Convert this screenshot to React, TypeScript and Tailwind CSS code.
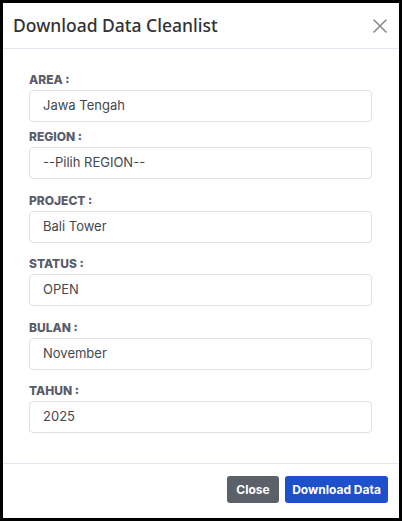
import React from "react";

const fields = [
  { label: "AREA :", value: "Jawa Tengah", mb: "mb-[5px]" },
  { label: "REGION :", value: "--Pilih REGION--", mb: "mb-3" },
  { label: "PROJECT :", value: "Bali Tower", mb: "mb-[11px]" },
  { label: "STATUS :", value: "OPEN", mb: "mb-3" },
  { label: "BULAN :", value: "November", mb: "mb-[11px]" },
  { label: "TAHUN :", value: "2025", mb: "mb-0" },
];

export default function App() {
  return (
    <div className="w-[402px] h-[521px] bg-black pt-[3px] pl-[3px]">
      <div className="w-[396px] h-[515px] bg-white flex flex-col">
        <div className="h-[46px] border-b border-[#e3e6f0] flex items-center justify-between pl-[10px] pr-[10px]">
          <div
            className="text-[17.5px] font-medium text-[#333] leading-none"
            style={{ fontFamily: '"Noto Sans", sans-serif' }}
          >
            Download Data Cleanlist
          </div>
          <svg width="14" height="14" viewBox="0 0 14 14" className="mr-[2px]">
            <path d="M1 1 L13 13 M13 1 L1 13" stroke="#8a8a8a" strokeWidth="1.6" strokeLinecap="round" />
          </svg>
        </div>
        <div className="flex-1 pl-[26px] pr-[27px] pt-[21px]" style={{ fontFamily: 'Inter, "Noto Sans", sans-serif' }}>
          {fields.map((f) => (
            <div key={f.label} className={f.mb}>
              <div className="h-[20px] text-[12px] font-extrabold text-[#5a5c69] leading-[20px]">{f.label}</div>
              <div className="h-[32px] border border-[#dfe1e6] rounded-[4px] flex items-center pl-[13px] text-[13px] text-[#45474d]">
                {f.value}
              </div>
            </div>
          ))}
        </div>
        <div className="h-[55px] border-t border-[#e3e6f0] flex items-start justify-end pt-[12px] pr-[11px] gap-[6px]" style={{ fontFamily: 'Inter, "Noto Sans", sans-serif' }}>
          <div className="w-[52px] h-[27px] rounded-[3px] bg-[#5b6069] text-white text-[12px] font-bold flex items-center justify-center">
            Close
          </div>
          <div className="w-[103px] h-[27px] rounded-[3px] bg-[#1e50cc] text-white text-[12px] font-bold flex items-center justify-center">
            Download Data
          </div>
        </div>
      </div>
    </div>
  );
}
